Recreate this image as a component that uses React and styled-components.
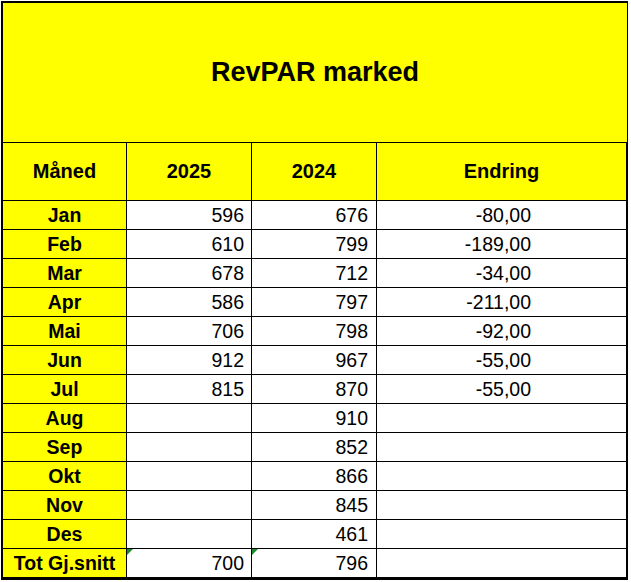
import React from 'react';
import styled, { createGlobalStyle } from 'styled-components';

const Global = createGlobalStyle`
  body { margin: 0; background: #fff; font-family: "Liberation Sans", Arial, sans-serif; }
`;

const Page = styled.div`
  padding: 1px;
`;

const Sheet = styled.div`
  display: grid;
  grid-template-columns: 124px 125px 125px 250px;
  grid-template-rows: 140px 58px repeat(13, 29px);
  width: 624px;
  border: 2px solid #000;
  border-right-width: 1px;
`;

const Title = styled.div`
  grid-column: 1 / -1;
  background: #ffff00;
  display: flex;
  align-items: center;
  justify-content: center;
  font-weight: bold;
  font-size: 27px;
  border-bottom: 1px solid #000;
`;

const Cell = styled.div`
  position: relative;
  display: flex;
  align-items: center;
  justify-content: ${(p) => p.$align || 'flex-end'};
  padding-right: ${(p) => p.$pr || 0}px;
  background: ${(p) => (p.$yellow ? '#ffff00' : '#fff')};
  font-weight: ${(p) => (p.$bold ? 'bold' : 'normal')};
  font-size: ${(p) => (p.$head ? 20 : 19.5)}px;
  border-right: 1px solid #000;
  border-bottom: 1px solid #000;
  box-sizing: border-box;
`;

const Flag = styled.span`
  position: absolute;
  top: 0;
  left: 0;
  width: 0;
  height: 0;
  border-top: 6px solid #1b8a2e;
  border-right: 6px solid transparent;
`;

const rows = [
  ['Jan', '596', '676', '-80,00'],
  ['Feb', '610', '799', '-189,00'],
  ['Mar', '678', '712', '-34,00'],
  ['Apr', '586', '797', '-211,00'],
  ['Mai', '706', '798', '-92,00'],
  ['Jun', '912', '967', '-55,00'],
  ['Jul', '815', '870', '-55,00'],
  ['Aug', '', '910', ''],
  ['Sep', '', '852', ''],
  ['Okt', '', '866', ''],
  ['Nov', '', '845', ''],
  ['Des', '', '461', ''],
];

export default function App() {
  return (
    <Page>
      <Global />
      <Sheet>
        <Title>RevPAR marked</Title>
        <Cell $yellow $bold $head $align="center">Måned</Cell>
        <Cell $yellow $bold $head $align="center">2025</Cell>
        <Cell $yellow $bold $head $align="center">2024</Cell>
        <Cell $yellow $bold $head $align="center">Endring</Cell>
        {rows.map(([m, a, b, c]) => (
          <React.Fragment key={m}>
            <Cell $yellow $bold $align="center">{m}</Cell>
            <Cell $pr={7}>{a}</Cell>
            <Cell $pr={8}>{b}</Cell>
            <Cell $pr={95}>{c}</Cell>
          </React.Fragment>
        ))}
        <Cell $yellow $bold $align="center">Tot Gj.snitt</Cell>
        <Cell $pr={7}><Flag />700</Cell>
        <Cell $pr={8}><Flag />796</Cell>
        <Cell />
      </Sheet>
    </Page>
  );
}
